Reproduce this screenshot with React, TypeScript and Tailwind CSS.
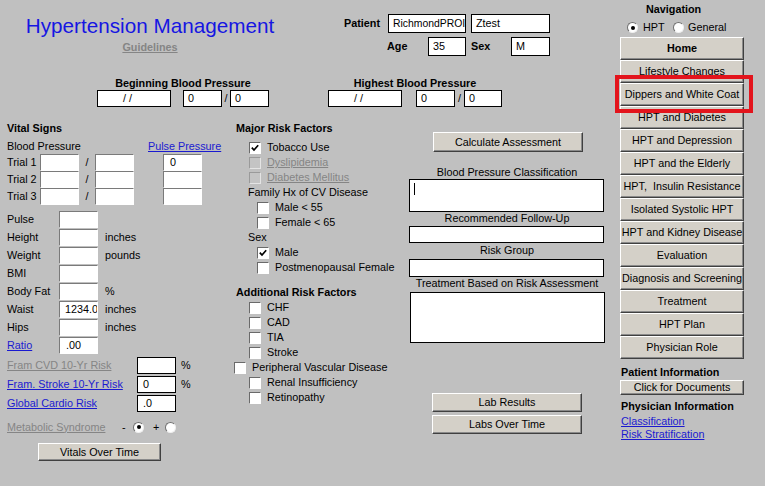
import type { ReactNode } from 'react';

const NAV = [
  'Home',
  'Lifestyle Changes',
  'Dippers and White Coat',
  'HPT and Diabetes',
  'HPT and Depression',
  'HPT and the Elderly',
  'HPT,  Insulin Resistance',
  'Isolated Systolic HPT',
  'HPT and Kidney Disease',
  'Evaluation',
  'Diagnosis and Screening',
  'Treatment',
  'HPT Plan',
  'Physician Role',
];

const VITALS = [
  { label: 'Pulse', unit: '' },
  { label: 'Height', unit: 'inches' },
  { label: 'Weight', unit: 'pounds' },
  { label: 'BMI', unit: '' },
  { label: 'Body Fat', unit: '%' },
  { label: 'Waist', unit: 'inches', value: '1234.0' },
  { label: 'Hips', unit: 'inches' },
];

function Field({ className = '', sunken, children }: { className?: string; sunken?: boolean; children?: ReactNode }) {
  return (
    <div
      className={`flex shrink-0 items-center overflow-hidden whitespace-nowrap bg-white pl-[4px] ${
        sunken
          ? 'border-t border-l border-b border-r border-t-[#7a7a7a] border-l-[#7a7a7a] border-b-white border-r-white'
          : 'border border-black'
      } ${className}`}
    >
      {children}
    </div>
  );
}

function Btn({ className = '', children }: { className?: string; children: ReactNode }) {
  return (
    <div
      className={`flex shrink-0 items-center justify-center whitespace-pre border border-t-white border-l-white border-r-[#404040] border-b-[#404040] bg-[#d4d0c8] shadow-[inset_-1px_-1px_0_#8a8a8a] ${className}`}
    >
      {children}
    </div>
  );
}

function Check({ checked, disabled }: { checked?: boolean; disabled?: boolean }) {
  return (
    <div
      className={`h-[12px] w-[12px] shrink-0 border ${
        disabled
          ? 'border-t-[#9a9a9a] border-l-[#9a9a9a] border-b-[#e4e4e4] border-r-[#e4e4e4] bg-[#c4c4c4]'
          : 'border-t-[#6a6a6a] border-l-[#6a6a6a] border-b-white border-r-white bg-white'
      }`}
    >
      {checked && (
        <svg width="10" height="10" viewBox="0 0 10 10">
          <polyline points="1.8,4.6 4,7 8.2,2.2" fill="none" stroke="#000" strokeWidth="1.7" />
        </svg>
      )}
    </div>
  );
}

function CheckRow({ className = '', checked, disabled, children }: { className?: string; checked?: boolean; disabled?: boolean; children: ReactNode }) {
  return (
    <div className={`flex h-[15px] items-center ${className}`}>
      <Check checked={checked} disabled={disabled} />
      <span className={`ml-[6px] whitespace-nowrap ${disabled ? 'text-[#858585] underline' : ''}`}>{children}</span>
    </div>
  );
}

function Radio({ checked, className = '' }: { checked?: boolean; className?: string }) {
  return (
    <div
      className={`flex h-[11px] w-[11px] shrink-0 items-center justify-center rounded-full border border-t-[#707070] border-l-[#707070] border-b-[#f0f0f0] border-r-[#f0f0f0] bg-white ${className}`}
    >
      {checked && <div className="h-[4px] w-[4px] rounded-full bg-black" />}
    </div>
  );
}

export default function App() {
  return (
    <div className="relative flex h-[486px] w-[765px] overflow-hidden bg-[#c0c0c0] font-['Liberation_Sans',Arial,sans-serif] text-[10.8px] leading-[13px] text-black">
      {/* main form */}
      <div className="flex w-[615px] flex-col">
        <div className="flex h-[60px] pt-[14px]">
          <div className="ml-[26px] flex w-[248px] flex-col items-center">
            <div className="whitespace-nowrap text-[20.7px] leading-[24px] text-[#1616e2]">Hypertension Management</div>
            <div className="mt-[3px] font-bold text-[#858585] underline">Guidelines</div>
          </div>
          <div className="ml-[70px] flex flex-col">
            <div className="flex h-[19px] items-center">
              <span className="w-[44px] font-bold">Patient</span>
              <Field className="h-[19px] w-[78px] pl-[3px] text-[10.4px]">RichmondPROI</Field>
              <Field className="ml-[5px] h-[19px] w-[79px]">Ztest</Field>
            </div>
            <div className="mt-[4px] flex h-[19px] items-center">
              <span className="ml-[43px] w-[41px] font-bold">Age</span>
              <Field className="h-[19px] w-[38px]">35</Field>
              <span className="ml-[5px] w-[40px] font-bold">Sex</span>
              <Field className="h-[19px] w-[39px]">M</Field>
            </div>
          </div>
        </div>

        <div className="mt-[16px] flex pl-[97px]">
          <div className="flex w-[172px] flex-col">
            <div className="h-[14px] whitespace-nowrap text-center font-bold leading-[14px]">Beginning Blood Pressure</div>
            <div className="flex h-[17px] items-center">
              <Field className="h-[17px] w-[74px] pl-[25px]">/ /</Field>
              <Field className="ml-[12px] h-[17px] w-[39px]">0</Field>
              <span className="w-[8px] text-center">/</span>
              <Field className="h-[17px] w-[39px]">0</Field>
            </div>
          </div>
          <div className="ml-[59px] flex w-[174px] flex-col">
            <div className="h-[14px] whitespace-nowrap text-center font-bold leading-[14px]">Highest Blood Pressure</div>
            <div className="flex h-[17px] items-center">
              <Field className="h-[17px] w-[74px] pl-[25px]">/ /</Field>
              <Field className="ml-[14px] h-[17px] w-[39px]">0</Field>
              <span className="w-[9px] text-center">/</span>
              <Field className="h-[17px] w-[38px]">0</Field>
            </div>
          </div>
        </div>

        <div className="mt-[15px] flex">
          {/* vital signs */}
          <div className="flex w-[234px] flex-col pl-[7px]">
            <div className="h-[13px] font-bold">Vital Signs</div>
            <div className="mt-[5px] flex h-[13px]">
              <span className="w-[141px]">Blood Pressure</span>
              <span className="text-[#1a1ad0] underline">Pulse Pressure</span>
            </div>
            <div className="mt-[1px] flex flex-col">
              {['Trial 1', 'Trial 2', 'Trial 3'].map((t, i) => (
                <div key={t} className="flex h-[17px] items-center">
                  <span className="w-[33px]">{t}</span>
                  <Field sunken className="h-[17px] w-[39px]" />
                  <span className="w-[16px] text-center">/</span>
                  <Field sunken className="h-[17px] w-[39px]" />
                  <Field sunken className="ml-[29px] h-[17px] w-[39px] pl-[6px]">{i === 0 ? '0' : ''}</Field>
                </div>
              ))}
            </div>
            <div className="mt-[6px] flex flex-col">
              {VITALS.map((v) => (
                <div key={v.label} className="mb-[1px] flex h-[17px] items-center">
                  <span className="w-[52px]">{v.label}</span>
                  <Field sunken className="h-[17px] w-[39px] pl-[5px]">{v.value}</Field>
                  <span className="ml-[7px]">{v.unit}</span>
                </div>
              ))}
              <div className="mb-[1px] flex h-[17px] items-center">
                <span className="w-[52px] text-[#1a1ad0] underline">Ratio</span>
                <Field sunken className="h-[17px] w-[39px] pl-[6px]">.00</Field>
              </div>
            </div>
            <div className="mt-[2px] flex flex-col">
              <div className="mb-[2px] flex h-[17px] items-center">
                <span className="w-[130px] text-[#858585] underline">Fram CVD 10-Yr Risk</span>
                <Field className="h-[17px] w-[39px]" />
                <span className="ml-[5px]">%</span>
              </div>
              <div className="mb-[2px] flex h-[17px] items-center">
                <span className="w-[130px] text-[#1a1ad0] underline">Fram. Stroke 10-Yr Risk</span>
                <Field className="h-[17px] w-[39px] pl-[5px]">0</Field>
                <span className="ml-[5px]">%</span>
              </div>
              <div className="mb-[2px] flex h-[17px] items-center">
                <span className="w-[130px] text-[#1a1ad0] underline">Global Cardio Risk</span>
                <Field className="h-[17px] w-[39px] pl-[5px]">.0</Field>
              </div>
            </div>
            <div className="mt-[6px] flex h-[14px] items-center">
              <span className="w-[115px] text-[#858585] underline">Metabolic Syndrome</span>
              <span className="w-[5px]">-</span>
              <Radio checked className="ml-[6px]" />
              <span className="ml-[9px] w-[6px]">+</span>
              <Radio className="ml-[6px]" />
            </div>
            <Btn className="ml-[31px] mt-[9px] h-[18px] w-[123px]">Vitals Over Time</Btn>
          </div>

          {/* risk factors */}
          <div className="flex w-[175px] flex-col">
            <div className="h-[13px] pl-[2px] font-bold">Major Risk Factors</div>
            <div className="mt-[5px] flex flex-col">
              <CheckRow className="pl-[15px]" checked>Tobacco Use</CheckRow>
              <CheckRow className="pl-[15px]" disabled>Dyslipidemia</CheckRow>
              <CheckRow className="pl-[15px]" disabled>Diabetes Mellitus</CheckRow>
              <div className="flex h-[15px] items-center pl-[14px]">Family Hx of CV Disease</div>
              <CheckRow className="pl-[23px]">Male &lt; 55</CheckRow>
              <CheckRow className="pl-[23px]">Female &lt; 65</CheckRow>
              <div className="flex h-[15px] items-center pl-[14px]">Sex</div>
              <CheckRow className="pl-[23px]" checked>Male</CheckRow>
              <CheckRow className="pl-[23px]">Postmenopausal Female</CheckRow>
            </div>
            <div className="mt-[11px] h-[13px] pl-[2px] font-bold">Additional Risk Factors</div>
            <div className="mt-[1px] flex flex-col">
              <CheckRow className="pl-[15px]">CHF</CheckRow>
              <CheckRow className="pl-[15px]">CAD</CheckRow>
              <CheckRow className="pl-[15px]">TIA</CheckRow>
              <CheckRow className="pl-[15px]">Stroke</CheckRow>
              <CheckRow>Peripheral Vascular Disease</CheckRow>
              <CheckRow className="pl-[15px]">Renal Insufficiency</CheckRow>
              <CheckRow className="pl-[15px]">Retinopathy</CheckRow>
            </div>
          </div>

          {/* assessment */}
          <div className="flex w-[196px] flex-col">
            <Btn className="ml-[24px] mt-[10px] h-[20px] w-[150px]">Calculate Assessment</Btn>
            <div className="mt-[14px] h-[13px] text-center">Blood Pressure Classification</div>
            <div className="h-[33px] w-[195px] border border-black bg-white pl-[4px] pt-[3px]">
              <div className="h-[12px] w-[1px] bg-black" />
            </div>
            <div className="h-[13px] text-center">Recommended Follow-Up</div>
            <div className="mt-[1px] h-[17px] w-[195px] border border-black bg-white" />
            <div className="mt-[1px] h-[13px] text-center">Risk Group</div>
            <div className="mt-[2px] h-[18px] w-[195px] border border-black bg-white" />
            <div className="h-[13px] whitespace-nowrap text-center">Treatment Based on Risk Assessment</div>
            <div className="ml-[1px] mt-[2px] h-[51px] w-[195px] border border-black bg-white" />
            <Btn className="ml-[23px] mt-[50px] h-[19px] w-[150px]">Lab Results</Btn>
            <Btn className="ml-[23px] mt-[3px] h-[19px] w-[150px]">Labs Over Time</Btn>
          </div>
        </div>
      </div>

      {/* navigation */}
      <div className="flex w-[150px] flex-col pt-[3px]">
        <div className="ml-[31px] h-[13px] font-bold">Navigation</div>
        <div className="mt-[5px] flex h-[13px] items-center pl-[12px]">
          <Radio checked />
          <span className="ml-[5px] w-[30px]">HPT</span>
          <Radio />
          <span className="ml-[4px]">General</span>
        </div>
        <div className="ml-[5px] mt-[3px] flex w-[124px] flex-col">
          {NAV.map((n, i) => (
            <Btn key={n} className={`h-[23px] w-[124px] ${i === 0 ? 'font-bold' : ''}`}>
              {n}
            </Btn>
          ))}
        </div>
        <div className="ml-[6px] mt-[7px] h-[13px] font-bold">Patient Information</div>
        <Btn className="ml-[5px] mt-[1px] h-[15px] w-[124px]">Click for Documents</Btn>
        <div className="ml-[6px] mt-[5px] h-[13px] font-bold">Physician Information</div>
        <div className="ml-[6px] mt-[2px] h-[13px] text-[#1a1ad0] underline">Classification</div>
        <div className="ml-[6px] h-[13px] text-[#1a1ad0] underline">Risk Stratification</div>
      </div>

      {/* highlight marker over nav */}
      <div className="absolute left-[615px] top-[75px] h-[38px] w-[138px] border-4 border-[#e3141c]" />
    </div>
  );
}
